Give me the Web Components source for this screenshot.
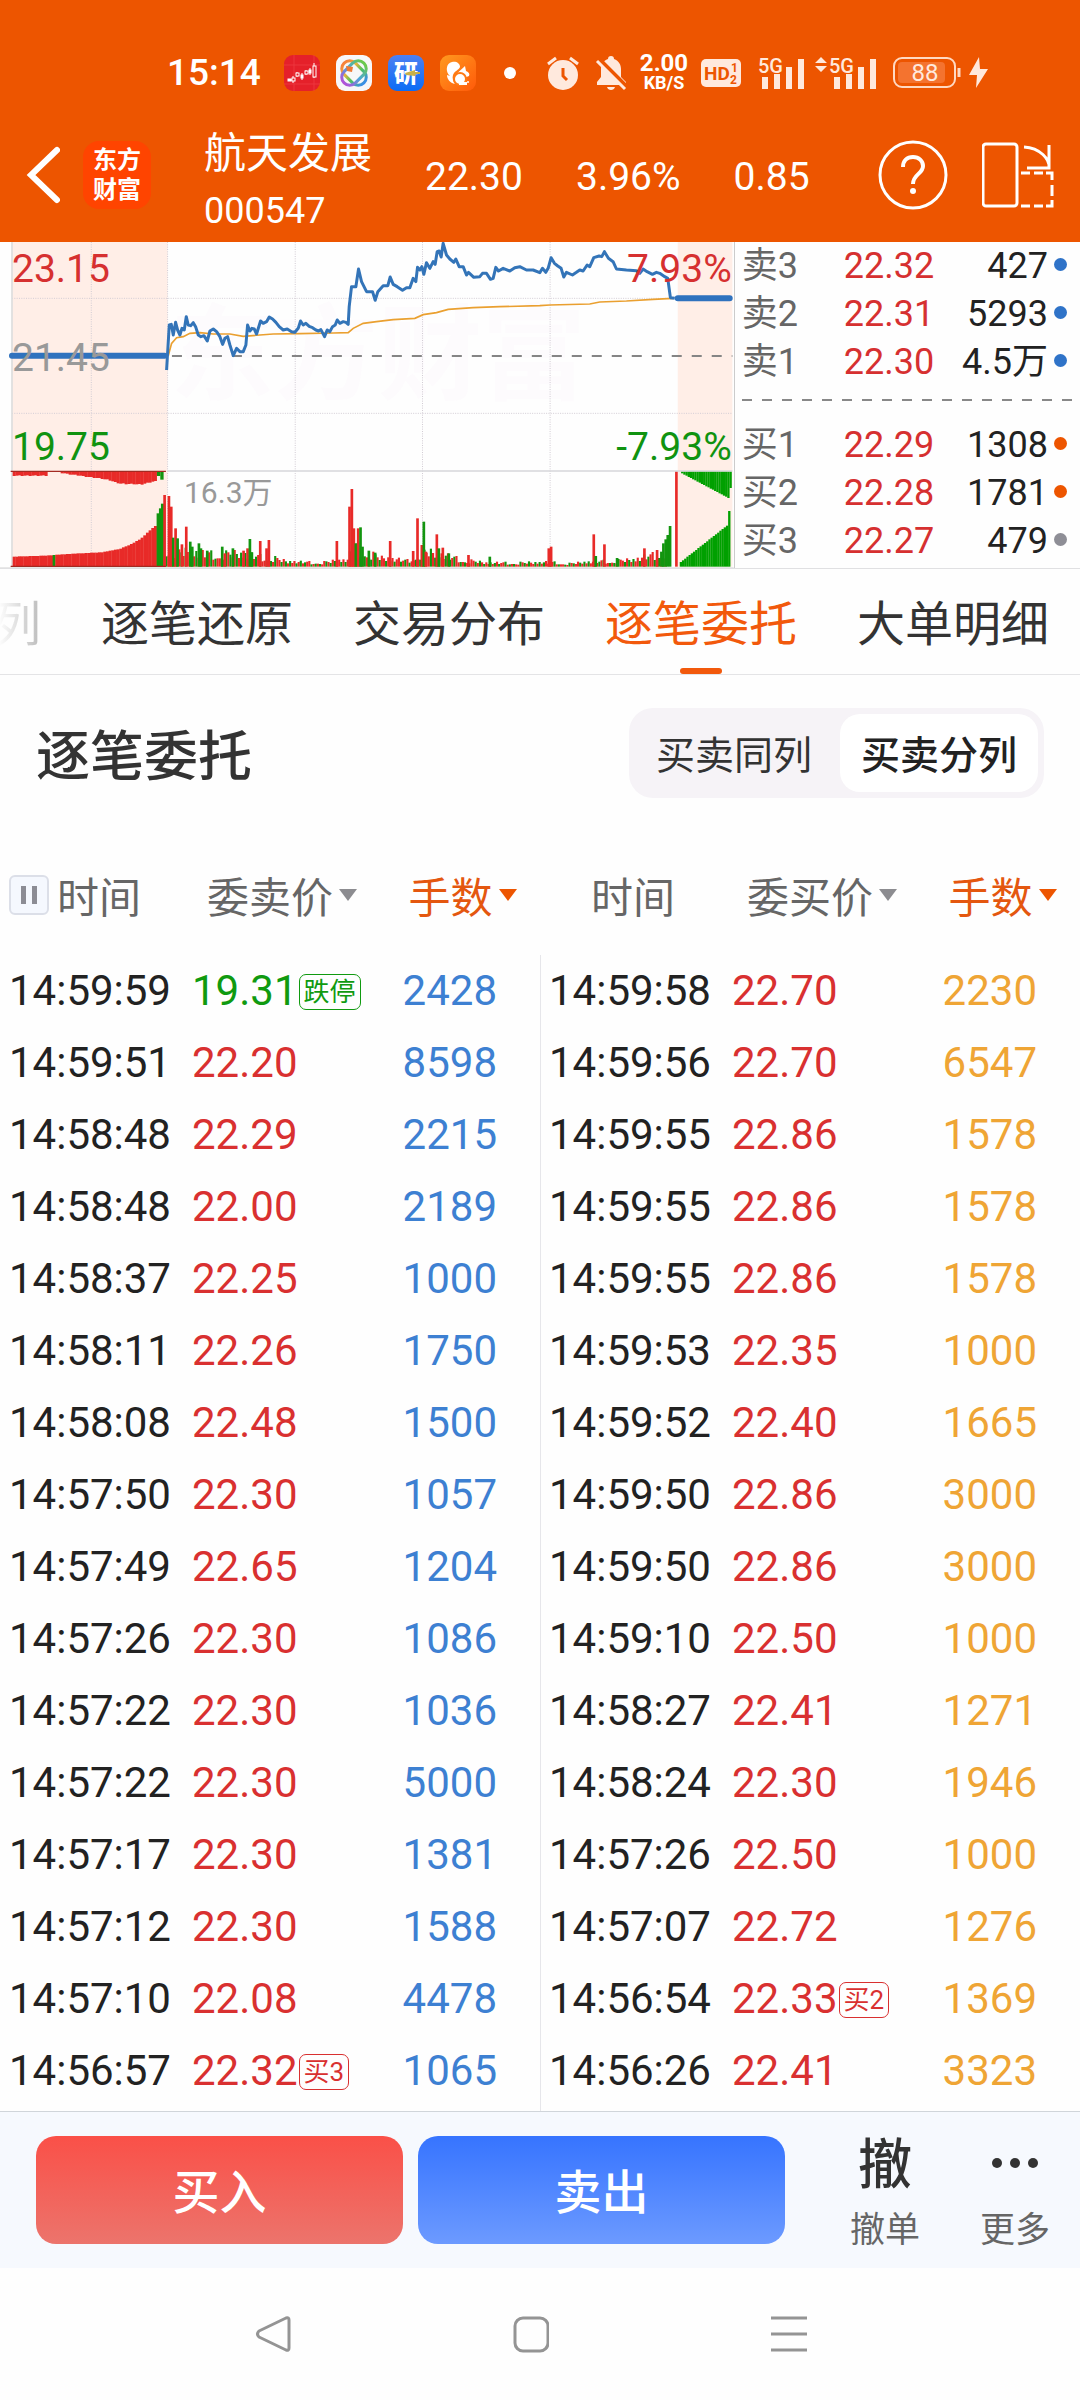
<!DOCTYPE html>
<html lang="zh-CN">
<head>
<meta charset="utf-8">
<meta name="viewport" content="width=device-width, initial-scale=1">
<title>航天发展 000547</title>
<style>
   html, body {
      margin: 0;
      background: #fefefe;
   }
   body {
      font-family: Roboto, "Noto Sans CJK SC", sans-serif;
      color: #222;
   }
</style>
</head>
<body>
<stock-page>
   <status-bar slot="top" time="15:14" battery="88"></status-bar>
   <stock-header slot="top" name="航天发展" code="000547" price="22.30" percent="3.96%" change="0.85"></stock-header>
   <minute-chart slot="quote"></minute-chart>
   <order-book slot="quote"></order-book>
   <tab-strip></tab-strip>
   <list-switch>逐笔委托</list-switch>
   <order-lists></order-lists>
   <trade-bar></trade-bar>
   <system-nav></system-nav>
</stock-page>

<script>
const makeTemplate = html => {
   const template = document.createElement("template")
   template.innerHTML = html
   return template
}

class BaseElement extends HTMLElement {
   constructor(){
      super()
      this.attachShadow({ mode: 'open' })
      this.shadowRoot.appendChild(this.constructor.template.content.cloneNode(true))
   }
   $(selector){
      return this.shadowRoot.querySelector(selector)
   }
}

// ---------- page frame ----------
class StockPage extends BaseElement {
   static template = makeTemplate(`
      <style>
         :host {
            display: flex;
            flex-direction: column;
            min-height: 100vh;
         }
         header {
            background: #ed5500;
            color: #fff;
         }
         .quote {
            display: flex;
            border-bottom: 1px solid #e0e0e2;
         }
      </style>
      <header><slot name="top"></slot></header>
      <div class="quote"><slot name="quote"></slot></div>
      <slot></slot>
   `)
}
customElements.define("stock-page", StockPage)

// ---------- status bar ----------
class StatusBar extends BaseElement {
   static template = makeTemplate(`
      <style>
         :host {
            display: flex;
            align-items: center;
            box-sizing: border-box;
            height: 116px;
            padding: 30px 91px 0 167px;
            color: #ffe9dd;
         }
         svg {
            display: block;
            flex: none;
            overflow: visible;
         }
         .time {
            font-size: 37px;
            font-weight: 500;
            line-height: 40px;
            color: #fff;
         }
         .apps {
            display: flex;
            gap: 16px;
            margin-left: 23px;
         }
         .dot {
            width: 12px;
            height: 12px;
            border-radius: 50%;
            background: #fff;
            margin-left: 28px;
         }
         .system {
            display: flex;
            align-items: center;
            margin-left: auto;
            gap: 16px;
         }
         .speed {
            width: 50px;
            margin: 0 -4px;
            font-size: 24px;
            font-weight: 700;
            line-height: 20px;
            text-align: center;
            color: #fff;
         }
         .speed small {
            display: block;
            font-size: 18px;
         }
      </style>
      <span class="time"></span>
      <div class="apps">
         <svg width="36" height="36" viewBox="0 0 36 36">
            <rect width="36" height="36" rx="9" fill="#e5202a"/>
            <path d="M0 10h36M0 29h36M10 0v36M30 0v36" stroke="#f0454a" stroke-width="1" opacity=".6"/>
            <g fill="#fff" stroke="#fff">
               <path d="M4 25h4M9 21v7M13 17v5M18 18v7M22 15v5M26 13v7M30 8v15" fill="none" stroke-width="1"/>
               <rect x="4" y="24" width="3" height="2"/><rect x="8" y="23" width="3" height="3" fill="#e5202a"/>
               <rect x="12" y="18" width="3" height="3" fill="#e5202a"/><rect x="17" y="20" width="2" height="3"/>
               <rect x="21" y="16" width="3" height="3" fill="#e5202a"/><rect x="25" y="15" width="2" height="3"/>
               <rect x="29" y="11" width="3" height="11" fill="#e5202a"/>
            </g>
         </svg>
         <svg width="36" height="36" viewBox="0 0 36 36">
            <defs>
               <linearGradient id="loopA" x1="0" y1="0" x2="1" y2="0">
                  <stop offset="0" stop-color="#f6813c"/><stop offset=".3" stop-color="#f3b13a"/>
                  <stop offset=".6" stop-color="#4ec45c"/><stop offset="1" stop-color="#3a8ee8"/>
               </linearGradient>
               <linearGradient id="loopB" x1="1" y1="0" x2="0" y2="0">
                  <stop offset="0" stop-color="#6bc94a"/><stop offset=".5" stop-color="#4aa7d8"/>
                  <stop offset="1" stop-color="#b052d8"/>
               </linearGradient>
            </defs>
            <rect width="36" height="36" rx="9" fill="#f7f7f8"/>
            <rect x="4" y="10" width="28" height="16" rx="8" transform="rotate(45 18 18)" fill="none" stroke="url(#loopA)" stroke-width="3"/>
            <rect x="4" y="10" width="28" height="16" rx="8" transform="rotate(-45 18 18)" fill="none" stroke="url(#loopB)" stroke-width="3"/>
            <path d="M10 11l7 1-1 5-5-1z" fill="#f07a35"/>
         </svg>
         <svg width="36" height="36" viewBox="0 0 36 36">
            <defs><linearGradient id="blue" x2="0" y2="1"><stop stop-color="#4c80f2"/><stop offset="1" stop-color="#0b6cf5"/></linearGradient></defs>
            <rect width="36" height="36" rx="9" fill="url(#blue)"/>
            <text x="6" y="27" font-size="24" font-weight="900" fill="#fff">研</text>
            <path d="M17 18l10-3v2h5v2h-4l-1 2-9-1z" fill="#c8b04a"/>
         </svg>
         <svg width="36" height="36" viewBox="0 0 36 36">
            <defs><linearGradient id="amber" x2="1" y2="1"><stop stop-color="#ff9a1f"/><stop offset="1" stop-color="#ff5a0a"/></linearGradient></defs>
            <rect width="36" height="36" rx="9" fill="url(#amber)"/>
            <path d="M12 7c4-1 8 1 8 5-1 3-6 4-7 8-1 3 0 6 2 9-5-1-8-5-8-9l3 1C5 17 6 8 12 7z" fill="#fff"/>
            <path d="M16 20c2-3 6-6 9-9l1 5c3 1 4 3 3 5l-5 2z" fill="#fff"/>
            <circle cx="20" cy="24" r="6" fill="#fff" stroke="#ff7a14" stroke-width="2"/>
            <path d="M19 27h8v3h-8z" fill="#fff"/>
            <circle cx="28" cy="27" r="1" fill="#fff"/>
         </svg>
      </div>
      <i class="dot"></i>
      <div class="system">
         <svg width="32" height="34" viewBox="0 0 32 34" fill="currentColor">
            <circle cx="16" cy="19" r="15"/>
            <path d="M1 8l8-6M31 8l-8-6" stroke="currentColor" stroke-width="3"/>
            <path d="M16 12v8l4 4" fill="none" stroke="#ed5500" stroke-width="3"/>
         </svg>
         <svg width="32" height="34" viewBox="0 0 32 34" fill="currentColor">
            <path d="M16 0c2 0 3 1 3 3 5 2 7 6 7 10v8l5 5v3H2v-3l4-5v-8c0-4 2-8 7-10 0-2 1-3 3-3zM12 31h8c-1 4-7 4-8 0z"/>
            <path d="M4 3l29 29" stroke="#ed5500" stroke-width="4"/>
            <path d="M2 5l28 28" stroke="currentColor" stroke-width="3"/>
         </svg>
         <span class="speed">2.00<small>KB/S</small></span>
         <svg width="40" height="28" viewBox="0 0 40 28">
            <rect width="40" height="28" rx="5" fill="currentColor"/>
            <g fill="#ed5500" font-weight="700">
               <text x="3" y="21" font-size="19">HD</text>
               <text x="30" y="13" font-size="12">1</text>
               <text x="29" y="25" font-size="12">2</text>
            </g>
         </svg>
         <svg width="48" height="34" viewBox="0 0 48 34" fill="currentColor">
            <text x="1" y="17" font-size="20" font-weight="500">5G</text>
            <path d="M5 21h6v12H5zM17 18h6v15h-6zM29 11h6v22h-6zM41 3h6v30h-6z"/>
         </svg>
         <svg width="62" height="34" viewBox="0 0 62 34" fill="currentColor" style="margin-left: -6px">
            <path d="M0 7l6-6 6 6zM0 10l6 6 6-6z"/>
            <text x="14" y="17" font-size="20" font-weight="500">5G</text>
            <path d="M19 21h6v12h-6zM31 18h6v15h-6zM43 11h6v22h-6zM55 3h6v30h-6z"/>
         </svg>
         <svg width="96" height="34" viewBox="0 0 96 34">
            <rect x="1" y="2" width="61" height="29" rx="8" fill="none" stroke="#ffd9c2" stroke-width="2"/>
            <rect x="5" y="6" width="47" height="21" rx="4" fill="#f4732f"/>
            <path d="M66 12v9" stroke="#ffd9c2" stroke-width="3"/>
            <text class="battery" x="32" y="25" font-size="24" text-anchor="middle" fill="#ffe9dd"></text>
            <path d="M86 1L76 19h8l-1 13 12-19h-8z" fill="currentColor"/>
         </svg>
      </div>
   `)
   connectedCallback(){
      this.$(".time").textContent = this.getAttribute("time")
      this.$(".battery").textContent = this.getAttribute("battery")
   }
}
customElements.define("status-bar", StatusBar)

// ---------- stock header ----------
class StockHeader extends BaseElement {
   static template = makeTemplate(`
      <style>
         :host {
            display: flex;
            align-items: center;
            box-sizing: border-box;
            height: 126px;
            padding: 0 26px 8px;
            font-size: 39px;
         }
         button {
            padding: 0;
            border: 0;
            background: none;
            color: inherit;
            font: inherit;
         }
         svg { display: block; }
         .logo {
            width: 68px;
            height: 68px;
            box-sizing: border-box;
            padding-top: 4px;
            margin-left: 23px;
            border-radius: 16px;
            background: #ff4400;
            font-size: 24px;
            font-weight: 700;
            line-height: 30px;
            text-align: center;
         }
         .stock {
            width: 168px;
            padding-top: 12px;
            margin-left: 53px;
         }
         .name {
            margin: 0;
            font-size: 42px;
            font-weight: 400;
            line-height: 60px;
         }
         .code {
            display: block;
            font-size: 36px;
            line-height: 54px;
         }
         .numbers {
            flex: 1;
            display: flex;
            gap: 53px;
            padding-top: 4px;
            margin-left: 53px;
         }
         .tools {
            display: flex;
            gap: 34px;
         }
      </style>
      <button aria-label="返回">
         <svg width="34" height="58" viewBox="0 0 34 58"><path d="M31 4L5 29l26 25" fill="none" stroke="#fff" stroke-width="6" stroke-linecap="round"/></svg>
      </button>
      <div class="logo">东方<br>财富</div>
      <div class="stock">
         <h1 class="name"></h1>
         <span class="code"></span>
      </div>
      <div class="numbers">
         <span class="price"></span><span class="percent"></span><span class="change"></span>
      </div>
      <div class="tools">
         <button aria-label="帮助">
            <svg width="70" height="70" viewBox="0 0 70 70" fill="none" stroke="#fff">
               <circle cx="35" cy="35" r="33" stroke-width="3"/>
               <path d="M25 27c0-6 4-10 10-10s10 4 10 9c0 8-10 8-10 18" stroke-width="4"/>
               <circle cx="35" cy="51" r="3" fill="#fff" stroke="none"/>
            </svg>
         </button>
         <button aria-label="横屏">
            <svg width="72" height="66" viewBox="0 0 72 66" fill="none" stroke="#fff" stroke-width="3">
               <rect x="1" y="2" width="34" height="62" rx="3"/>
               <path d="M42 5c16 1 26 12 25 21M67 3v23H45"/>
               <path d="M39 31h9M52 31h9M64 31h6v7M70 43v11M39 64h9M52 64h9M64 64h6v-6"/>
            </svg>
         </button>
      </div>
   `)
   connectedCallback(){
      for (const key of ["name", "code", "price", "percent", "change"]){
         this.$("." + key).textContent = this.getAttribute(key)
      }
   }
}
customElements.define("stock-header", StockHeader)

// ---------- minute chart ----------
const PRICE = "500,405 508,270 514,268 520,300 527,262 533,285 540,300 546,280 553,285 559,245 565,270 572,272 580,263 587,275 595,300 603,305 612,302 622,318 630,288 640,282 650,290 660,305 668,328 675,310 683,305 690,330 700,362 710,340 720,350 730,350 738,330 743,270 750,288 756,280 763,282 770,297 782,258 790,265 800,260 808,246 818,252 828,262 838,275 850,285 862,282 875,290 885,292 895,280 902,258 910,270 918,265 928,274 938,278 948,285 956,288 963,284 974,305 982,285 990,290 998,275 1006,270 1012,255 1020,265 1030,260 1038,262 1045,268 1048,215 1055,155 1068,155 1076,102 1085,140 1100,170 1118,170 1126,196 1134,170 1150,152 1164,152 1171,126 1180,148 1192,155 1208,166 1220,158 1230,158 1240,130 1248,140 1253,97 1260,105 1266,95 1272,118 1280,83 1290,100 1300,80 1306,88 1312,50 1318,48 1324,66 1330,25 1340,60 1350,72 1362,82 1368,72 1378,95 1390,95 1400,120 1406,112 1422,127 1440,125 1448,115 1460,115 1472,133 1480,130 1488,97 1496,108 1510,100 1530,108 1545,98 1560,95 1580,105 1600,105 1620,113 1628,100 1638,112 1645,100 1654,68 1664,85 1674,93 1684,100 1692,126 1700,112 1718,120 1730,112 1740,105 1750,108 1762,90 1770,95 1782,68 1798,63 1806,65 1814,50 1826,70 1840,80 1850,102 1880,105 1910,107 1920,115 1930,102 1942,110 1958,118 1970,112 1980,115 1995,125 2004,130 2012,188 2025,190"
const AVERAGE = "505,362 515,325 530,308 550,305 570,295 600,293 640,297 690,297 730,304 780,300 820,297 900,296 1000,294 1045,293 1060,280 1090,265 1130,260 1180,254 1245,250 1270,239 1310,233 1345,223 1420,218 1500,215 1620,212 1650,210 1770,207 1800,201 1880,198 1960,193 2020,190"

// [x, height, side] of the bars that stand out
const SPIKES = [
   [494,215,"r"],[507,212,"r"],[514,180,"r"],[520,87,"g"],[527,115,"r"],[533,85,"g"],[546,67,"r"],[559,120,"r"],
   [571,75,"g"],[577,60,"g"],[597,70,"g"],[603,55,"g"],[622,48,"g"],[667,60,"g"],[675,40,"r"],[699,55,"g"],
   [731,48,"r"],[743,55,"r"],[750,83,"g"],[756,43,"g"],[781,77,"r"],[800,55,"r"],[807,80,"r"],[1011,77,"r"],
   [1049,180,"r"],[1056,233,"r"],[1062,115,"r"],[1068,70,"g"],[1075,115,"r"],[1082,118,"g"],[1088,60,"g"],
   [1107,48,"g"],[1126,42,"g"],[1171,77,"r"],[1240,47,"r"],[1253,145,"r"],[1266,65,"r"],[1272,135,"g"],
   [1278,45,"r"],[1311,97,"r"],[1317,55,"g"],[1329,57,"r"],[1347,40,"g"],[1406,35,"r"],[1470,30,"g"],
   [1647,55,"r"],[1654,60,"r"],[1782,97,"r"],[1788,32,"g"],[1814,67,"r"],[1852,26,"g"],[1934,55,"r"],[1972,50,"r"],
   [1985,45,"g"],[1991,70,"g"],[1998,82,"g"],[2004,95,"g"],[2011,122,"g"]
]
// usual bar height at a given x, linear in between
const LEVELS = [[490,56],[600,42],[700,42],[820,28],[860,16],[960,14],[1040,22],[1060,70],[1100,46],[1140,28],[1220,20],[1270,50],[1330,36],[1400,20],[1460,12],[1660,14],[1700,10],[1800,18],[1900,22],[1985,46]]
const PRE_LOW = [[36,30],[130,33],[200,38],[300,43],[355,53],[395,70],[420,85],[450,113],[470,128]]
const PRE_TOP = [[36,12],[135,12],[180,4],[235,12],[320,24],[355,36],[420,38],[440,33],[470,27]]

function LevelAt(list, x){
   let i = 1
   while (i < list.length - 1 && list[i][0] < x) i += 1
   const [x0, y0] = list[i - 1]
   const [x1, y1] = list[i]
   return y0 + (y1 - y0) * (Math.min(x, x1) - x0) / (x1 - x0)
}

class MinuteChart extends BaseElement {
   static template = makeTemplate(`
      <style>
         :host {
            display: block;
            position: relative;
            flex: 68;
            height: 326px;
            overflow: hidden;
            border-right: 1px solid #ccc;
            font-size: 39px;
            line-height: 40px;
         }
         svg {
            display: block;
            position: relative;
            width: 100%;
            height: 100%;
         }
         span { position: absolute; }
         .high { top: 7px; color: #d63030; }
         .mid { top: 96px; left: 12px; color: #999; }
         .low { top: 185px; color: #109310; }
         .left { left: 12px; }
         .right { right: 2px; }
         .volume {
            top: 231px;
            left: 184px;
            font-size: 30px;
            color: #999;
         }
         .mark {
            top: 50px;
            left: 170px;
            font-size: 104px;
            font-weight: 700;
            line-height: 130px;
            color: #fdfbfd;
         }
      </style>
      <span class="mark" aria-hidden="true">东方财富</span>
      <svg viewBox="0 21 2202 978" preserveAspectRatio="none">
         <path d="M36 21H503V995H36zM2034 21H2198V995H2034z" fill="#ffeee7"/>
         <path d="M274 21V995M503 21V995M886 21V995M1268 21V995M1651 21V995M36 190H2198M36 535H2198" stroke="#d2ccd4" stroke-width="3" stroke-dasharray="3 4" fill="none"/>
         <path d="M36 21V995" stroke="#ddd" stroke-width="5"/>
         <path d="M0 998H2202" stroke="#e4e4e4" stroke-width="3"/>
         <path d="M516 363H2198" stroke="#858585" stroke-width="6" stroke-dasharray="30 30"/>
         <g class="bars"></g>
         <path d="M503 708H2198" stroke="#d6d6da" stroke-width="5"/>
         <path d="M32 709H498M32 994H498" stroke="#a32a22" stroke-width="4"/>
         <polyline class="average" fill="none" stroke="#eaa030" stroke-width="5"/>
         <polyline class="line" fill="none" stroke="#3374b8" stroke-width="9" stroke-linejoin="round"/>
         <path d="M36 362H494M2034 190H2190" stroke="#2f72be" stroke-width="18" stroke-linecap="round"/>
      </svg>
      <span class="high left">23.15</span>
      <span class="mid">21.45</span>
      <span class="low left">19.75</span>
      <span class="high right">7.93%</span>
      <span class="low right">-7.93%</span>
      <span class="volume">16.3万</span>
   `)
   connectedCallback(){
      this.$(".line").setAttribute("points", PRICE)
      this.$(".average").setAttribute("points", AVERAGE)
      this.$(".bars").innerHTML = this.PreOpenBars() + this.VolumeBars() + this.CloseBars()
   }
   Bar(x, y, width, height, side){
      const color = side == "r" ? "#e82a28" : "#12950f"
      return `<rect x="${x}" y="${y}" width="${width}" height="${height}" fill="${color}"/>`
   }
   PreOpenBars(){
      let bars = ""
      for (let x = 38; x < 468; x += 8){
         const low = Math.round(LevelAt(PRE_LOW, x))
         bars += this.Bar(x, 995 - low, 9, low, x > 150 && x < 165 ? "g" : "r")
         if (x > 135 && x < 175) continue
         bars += this.Bar(x, 709, 9, Math.round(LevelAt(PRE_TOP, x)) + x % 3, "r")
      }
      bars += this.Bar(470, 835, 8, 160, "g") + this.Bar(477, 820, 7, 175, "g") + this.Bar(483, 806, 9, 189, "g")
      bars += this.Bar(471, 709, 10, 14, "g") + this.Bar(481, 709, 10, 25, "g")
      return bars
   }
   VolumeBars(){
      let bars = ""
      for (let i = 0; i < 236; i += 1){
         const x = 490 + i * 6.4
         const wave = 0.5 + ((i * 37 + i * i * 11) % 23) / 30
         const height = Math.round(LevelAt(LEVELS, x) * wave)
         bars += this.Bar(x.toFixed(1), 995 - height, 6.4, height, (i * i + i * 5) % 7 < 3 ? "r" : "g")
      }
      for (const [x, height, side] of SPIKES){
         bars += this.Bar(x - 4, 995 - height, 8, height, side)
      }
      return bars
   }
   CloseBars(){
      let bars = this.Bar(2026, 709, 8, 286, "r")
      for (let i = 0; i < 23; i += 1){
         const x = 2040 + i * 6.6
         const low = i == 22 ? 167 : 14 + Math.round(i * 5.2)
         const top = i == 22 ? 50 : Math.round(6 + i * 3.5)
         bars += `<g fill="#00a000"><rect x="${x}" y="${995 - low}" width="7" height="${low}"/>`
         bars += `<rect x="${x + 4}" y="709" width="7" height="${top}"/></g>`
      }
      return bars
   }
}
customElements.define("minute-chart", MinuteChart)

// ---------- five level quotes ----------
class OrderBook extends BaseElement {
   static template = makeTemplate(`
      <style>
         :host {
            display: block;
            flex: 32;
            font-size: 36px;
            line-height: 48px;
         }
         table {
            width: 100%;
            border-collapse: collapse;
         }
         th, td { padding: 0; font-weight: 400; }
         th { width: 102px; padding-left: 7px; text-align: left; color: #666; }
         .price { color: #d63030; }
         .count { text-align: right; color: #222; }
         .mark { width: 32px; }
         .mark i {
            display: block;
            width: 13px;
            height: 13px;
            margin: -4px 0 0 6px;
            border-radius: 50%;
         }
         .gap { height: 35px; line-height: 0; vertical-align: top; }
         .gap svg {
            width: calc(100% - 15px);
            height: 2px;
            padding: 13px 8px 0 7px;
         }
         .blue { background: #2f73c8; }
         .orange { background: #ed5500; }
         .gray { background: #8e8e96; }
      </style>
      <table><tbody></tbody></table>
   `)
   connectedCallback(){
      const row = ([label, price, count, color]) => `<tr>
         <th scope="row">${label}</th><td class="price">${price}</td>
         <td class="count">${count}</td><td class="mark"><i class="${color}"></i></td></tr>`
      const sell = [["卖3", "22.32", "427", "blue"], ["卖2", "22.31", "5293", "blue"], ["卖1", "22.30", "4.5万", "blue"]]
      const buy = [["买1", "22.29", "1308", "orange"], ["买2", "22.28", "1781", "orange"], ["买3", "22.27", "479", "gray"]]
      this.$("tbody").innerHTML = sell.map(row).join("")
         + `<tr><td class="gap" colspan="4"><svg><path d="M0 1H400" stroke="#888" stroke-width="2" stroke-dasharray="10 10"/></svg></td></tr>`
         + buy.map(row).join("")
   }
}
customElements.define("order-book", OrderBook)

// ---------- tabs ----------
class TabStrip extends BaseElement {
   static template = makeTemplate(`
      <style>
         :host {
            display: block;
            overflow: hidden;
            border-bottom: 1px solid #e4e4e6;
         }
         nav {
            display: flex;
            gap: 60px;
            margin-left: -7px;
         }
         button {
            position: relative;
            flex: none;
            height: 105px;
            padding: 0 0 3px;
            border: 0;
            background: none;
            color: #333;
            font: inherit;
            font-size: 48px;
            white-space: nowrap;
         }
         .cut {
            color: transparent;
            background: linear-gradient(90deg, #fff 10%, #bbb);
            background-clip: text;
            -webkit-background-clip: text;
         }
         .active { color: #f2590c; }
         .active::after {
            content: "";
            position: absolute;
            left: 50%;
            bottom: 0;
            width: 42px;
            height: 6px;
            margin-left: -21px;
            border-radius: 3px;
            background: #f2590c;
         }
      </style>
      <nav>
         <button class="cut">列</button>
         <button>逐笔还原</button>
         <button>交易分布</button>
         <button class="active">逐笔委托</button>
         <button>大单明细</button>
      </nav>
   `)
}
customElements.define("tab-strip", TabStrip)

class ListSwitch extends BaseElement {
   static template = makeTemplate(`
      <style>
         :host {
            display: flex;
            align-items: center;
            justify-content: space-between;
            padding: 33px 36px 40px;
         }
         h2 {
            margin: 0;
            padding-top: 10px;
            font-size: 54px;
            font-weight: 500;
            line-height: 80px;
            color: #333;
         }
         .switch {
            display: flex;
            gap: 7px;
            padding: 6px;
            border-radius: 24px;
            background: #f6f3f7;
         }
         button {
            height: 78px;
            padding: 0 21px 2px;
            border: 0;
            border-radius: 20px;
            background: none;
            color: #333;
            font: inherit;
            font-size: 39px;
         }
         button.on {
            background: #fff;
            color: #222;
            font-weight: 500;
         }
      </style>
      <h2><slot></slot></h2>
      <div class="switch">
         <button aria-pressed="false">买卖同列</button>
         <button class="on" aria-pressed="true">买卖分列</button>
      </div>
   `)
   connectedCallback(){
      const buttons = this.shadowRoot.querySelectorAll("button")
      buttons.forEach(button => button.addEventListener("click", () => {
         buttons.forEach(other => {
            other.classList.toggle("on", other == button)
            other.setAttribute("aria-pressed", other == button)
         })
      }))
   }
}
customElements.define("list-switch", ListSwitch)

// ---------- order tables ----------
const SELL_ORDERS = [
   ["14:59:59", "19.31", "2428", "跌停"], ["14:59:51", "22.20", "8598"], ["14:58:48", "22.29", "2215"],
   ["14:58:48", "22.00", "2189"], ["14:58:37", "22.25", "1000"], ["14:58:11", "22.26", "1750"],
   ["14:58:08", "22.48", "1500"], ["14:57:50", "22.30", "1057"], ["14:57:49", "22.65", "1204"],
   ["14:57:26", "22.30", "1086"], ["14:57:22", "22.30", "1036"], ["14:57:22", "22.30", "5000"],
   ["14:57:17", "22.30", "1381"], ["14:57:12", "22.30", "1588"], ["14:57:10", "22.08", "4478"],
   ["14:56:57", "22.32", "1065", "买3"]
]
const BUY_ORDERS = [
   ["14:59:58", "22.70", "2230"], ["14:59:56", "22.70", "6547"], ["14:59:55", "22.86", "1578"],
   ["14:59:55", "22.86", "1578"], ["14:59:55", "22.86", "1578"], ["14:59:53", "22.35", "1000"],
   ["14:59:52", "22.40", "1665"], ["14:59:50", "22.86", "3000"], ["14:59:50", "22.86", "3000"],
   ["14:59:10", "22.50", "1000"], ["14:58:27", "22.41", "1271"], ["14:58:24", "22.30", "1946"],
   ["14:57:26", "22.50", "1000"], ["14:57:07", "22.72", "1276"], ["14:56:54", "22.33", "1369", "买2"],
   ["14:56:26", "22.41", "3323"]
]

class OrderList extends BaseElement {
   static template = makeTemplate(`
      <style>
         :host {
            display: block;
            font-size: 42px;
         }
         table {
            width: 100%;
            table-layout: fixed;
            border-collapse: collapse;
         }
         .c1 { width: 35%; }
         .c2 { width: 39%; }
         th, td {
            box-sizing: border-box;
            padding: 0;
            font-weight: 400;
            text-align: left;
            white-space: nowrap;
         }
         th { height: 117px; padding-bottom: 4px; color: #666; }
         td { height: 72px; line-height: 72px; }
         th:nth-child(2) { padding-left: 18px; }
         th:nth-child(3) { padding-left: 9px; }
         td:first-child { padding-left: 9px; color: #222; }
         td:nth-child(2) { padding-left: 3px; }
         td:nth-child(3) { padding-left: 3px; color: var(--count-color); }
         .up { color: #d93030; }
         .down { color: #109a10; }
         .head {
            display: flex;
            align-items: center;
            gap: 8px;
         }
         .time { padding-left: 9px; }
         :host([side=buy]) .time { padding-left: 51px; }
         :host([side=buy]) .pause { display: none; }
         .head button {
            display: flex;
            align-items: center;
            gap: 6px;
            padding: 0;
            border: 0;
            background: none;
            font: inherit;
            color: inherit;
         }
         .head button::after {
            content: "";
            border: 9px solid transparent;
            border-top: 12px solid #8c8c90;
            border-bottom: 0;
         }
         .head .sorted { color: #e4570f; }
         .head .sorted::after { border-top-color: #ed5500; }
         .head .pause {
            justify-content: center;
            width: 40px;
            height: 40px;
            border: 2px solid #dcdfe8;
            border-radius: 6px;
            background: #f5f8fe;
         }
         .head .pause::after { content: none; }
         .pause::before {
            content: "";
            width: 6px;
            height: 18px;
            border: solid #8c8c94;
            border-width: 0 5px;
         }
         .badge {
            display: inline-block;
            margin-left: 1px;
            padding: 0 4px;
            border: 1px solid currentColor;
            border-radius: 7px;
            font-size: 26px;
            line-height: 34px;
            vertical-align: 4px;
         }
      </style>
      <table>
         <colgroup><col class="c1"><col class="c2"><col></colgroup>
         <thead><tr>
            <th><div class="head time"><button class="pause" aria-label="暂停"></button>时间</div></th>
            <th><div class="head"><button class="name"></button></div></th>
            <th><div class="head"><button class="sorted">手数</button></div></th>
         </tr></thead>
         <tbody></tbody>
      </table>
   `)
   connectedCallback(){
      const buy = this.getAttribute("side") == "buy"
      this.$(".name").textContent = buy ? "委买价" : "委卖价"
      this.$("tbody").innerHTML = (buy ? BUY_ORDERS : SELL_ORDERS).map(([time, price, count, note]) => {
         const trend = Number(price) < 21.45 ? "down" : "up"
         const badge = note ? `<span class="badge">${note}</span>` : ""
         return `<tr><td>${time}</td><td class="${trend}">${price}${badge}</td><td>${count}</td></tr>`
      }).join("")
   }
}
customElements.define("order-list", OrderList)

class OrderLists extends BaseElement {
   static template = makeTemplate(`
      <style>
         :host {
            display: grid;
            grid-template-columns: 1fr 1fr;
            padding-bottom: 4px;
            background: linear-gradient(#e6e6ea, #e6e6ea) 50% 117px / 1px 100% no-repeat;
         }
         order-list[side=sell] { --count-color: #3d80d2; }
         order-list[side=buy] { --count-color: #efa535; }
      </style>
      <order-list side="sell"></order-list>
      <order-list side="buy"></order-list>
   `)
}
customElements.define("order-lists", OrderLists)

// ---------- bottom bars ----------
class TradeBar extends BaseElement {
   static template = makeTemplate(`
      <style>
         :host {
            display: flex;
            align-items: flex-start;
            padding: 24px 0 14px 36px;
            border-top: 1px solid #d0d5da;
            background: #f6f9fe;
         }
         button {
            padding: 0;
            border: 0;
            background: none;
            font: inherit;
         }
         .deal {
            flex: 1;
            height: 108px;
            padding-bottom: 4px;
            margin-right: 15px;
            border-radius: 20px;
            color: #fff;
            font-size: 47px;
            font-weight: 500;
         }
         .buy { background: linear-gradient(#fa5048, #ec746c); }
         .sell { background: linear-gradient(#3674ff, #6c9aff); }
         .side {
            display: flex;
            flex-direction: column;
            align-items: center;
            gap: 12px;
            width: 130px;
            font-size: 35px;
            line-height: 46px;
            color: #666;
         }
         .sides {
            display: flex;
            margin-left: 20px;
         }
         b {
            height: 60px;
            font-size: 54px;
            font-weight: 500;
            line-height: 60px;
            color: #333;
         }
         svg { display: block; }
      </style>
      <button class="deal buy">买入</button>
      <button class="deal sell">卖出</button>
      <div class="sides">
         <button class="side"><b>撤</b>撤单</button>
         <button class="side">
            <b><svg width="48" height="60" viewBox="0 0 48 60" fill="#333"><circle cx="6" cy="27" r="5"/><circle cx="24" cy="27" r="5"/><circle cx="42" cy="27" r="5"/></svg></b>
            更多
         </button>
      </div>
   `)
}
customElements.define("trade-bar", TradeBar)

class SystemNav extends BaseElement {
   static template = makeTemplate(`
      <style>
         :host {
            flex: 1;
            display: flex;
            align-items: center;
            justify-content: center;
            gap: 222px;
            padding-right: 18px;
            min-height: 120px;
         }
         button {
            padding: 0;
            border: 0;
            background: none;
         }
         svg {
            display: block;
            fill: none;
            stroke: #949494;
            stroke-width: 3;
         }
      </style>
      <button aria-label="返回"><svg width="36" height="38"><path d="M31 3L4 16q-3 3 0 6L31 35q3 1 3-2V5q0-3-3-2z" stroke-linejoin="round"/></svg></button>
      <button aria-label="主页"><svg width="36" height="38"><rect x="2" y="3" width="33" height="33" rx="8"/></svg></button>
      <button aria-label="任务"><svg width="36" height="38"><path d="M0 3h36M0 19h36M0 35h36"/></svg></button>
   `)
}
customElements.define("system-nav", SystemNav)
</script>
</body>
</html>
